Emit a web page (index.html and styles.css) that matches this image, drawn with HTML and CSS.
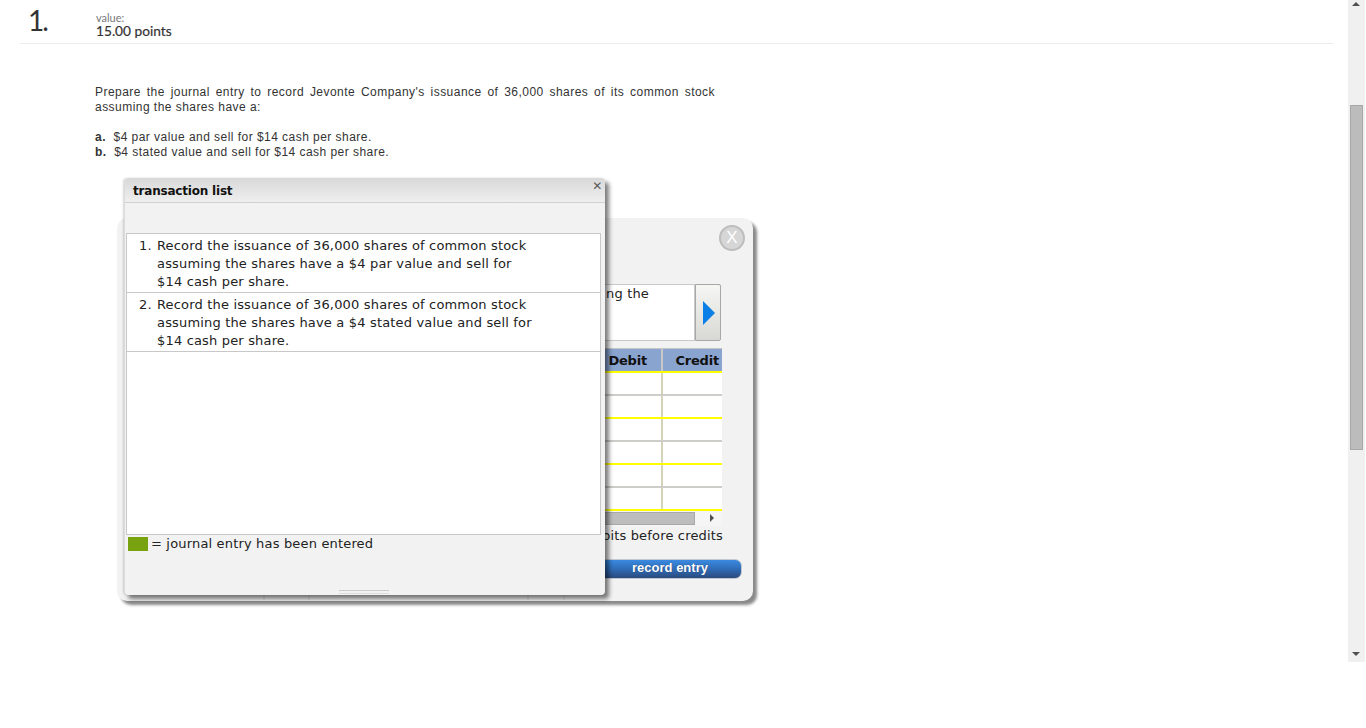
FILE: index.html
```html
<!DOCTYPE html>
<html lang="en">
<head>
  <meta charset="UTF-8" />
  <title>Question 1</title>
  <link rel="stylesheet" href="styles.css">
</head>
<body>
  <div class="page">
    <div class="question-head">
      <div class="question-num">1.</div>
      <div class="question-value">
        <div class="value-label">value:</div>
        <div class="value-points">15.00 points</div>
      </div>
    </div>

    <div class="question-body">
      <p class="prompt">Prepare the journal entry to record Jevonte Company's issuance of 36,000 shares of its common stock assuming the shares have a:</p>
      <p class="part"><b>a.</b>&nbsp; $4 par value and sell for $14 cash per share.</p>
      <p class="part"><b>b.</b>&nbsp; $4 stated value and sell for $14 cash per share.</p>
    </div>

    <!-- journal entry window, mostly covered by the list -->
    <div class="window entry-window">
      <div class="close-round">X</div>
      <div class="entry-desc">
        <div class="desc-text">ng the</div>
        <div class="desc-next"><span class="next-arrow"></span></div>
      </div>
      <div class="entry-table">
        <div class="table-head">
          <div class="cell-debit">Debit</div>
          <div class="cell-credit">Credit</div>
        </div>
        <div class="table-row"><div class="cell-debit"></div><div class="cell-credit"></div></div>
        <div class="table-row"><div class="cell-debit"></div><div class="cell-credit"></div></div>
        <div class="table-row"><div class="cell-debit"></div><div class="cell-credit"></div></div>
        <div class="table-row"><div class="cell-debit"></div><div class="cell-credit"></div></div>
        <div class="table-row"><div class="cell-debit"></div><div class="cell-credit"></div></div>
        <div class="table-row"><div class="cell-debit"></div><div class="cell-credit"></div></div>
      </div>
      <div class="entry-scroll">
        <div class="entry-scroll-thumb"></div>
        <div class="entry-scroll-arrow"></div>
      </div>
      <div class="entry-note">debits before credits</div>
      <div class="record-btn">record entry</div>
      <div class="entry-ticks">
        <span class="tick tick-a"></span>
        <span class="tick tick-b"></span>
        <span class="tick tick-c"></span>
        <span class="tick tick-d"></span>
      </div>
    </div>

    <div class="window list-window">
      <div class="list-title">
        <span>transaction list</span>
        <span class="list-close">&#10005;</span>
      </div>
      <div class="list-box">
        <div class="list-item"><span class="item-num">1.</span><span class="item-text">Record the issuance of 36,000 shares of common stock assuming the shares have a $4 par value and sell for $14 cash per share.</span></div>
        <div class="list-item"><span class="item-num">2.</span><span class="item-text">Record the issuance of 36,000 shares of common stock assuming the shares have a $4 stated value and sell for $14 cash per share.</span></div>
      </div>
      <div class="legend"><span class="legend-swatch"></span>= journal entry has been entered</div>
      <div class="grip"></div>
    </div>
  </div>

  <div class="scrollbar">
    <div class="scroll-up"></div>
    <div class="scroll-thumb"></div>
    <div class="scroll-down"></div>
  </div>
</body>
</html>
```

FILE: styles.css
```css
* {
  margin: 0;
  padding: 0;
  box-sizing: border-box;
}

html, body {
  height: 728px;
  overflow: hidden;
  background: #fff;
}

body {
  position: relative;
  font-family: 'Liberation Sans', Arial, sans-serif;
  color: #333;
}

.page {
  width: 1348px;
  padding: 0 15px 0 20px;
}

.question-head {
  display: flex;
  height: 44px;
  border-bottom: 1px solid #ececec;
}

.question-num {
  width: 76px;
  padding: 3px 0 0 8px;
  font-family: Lato, sans-serif;
  font-size: 28px;
  line-height: 34px;
  letter-spacing: -2px;
  color: #333;
}

.value-label {
  margin-top: 11px;
  font-family: Lato, sans-serif;
  font-size: 11px;
  line-height: 13px;
  color: #777;
}

.value-points {
  margin-top: -1px;
  font-family: Lato, sans-serif;
  font-size: 13.7px;
  line-height: 15px;
  color: #333;
  -webkit-text-stroke: 0.2px #333;
}

.question-body {
  width: 620px;
  margin: 41px 0 0 75px;
  font-size: 12px;
  line-height: 15px;
  letter-spacing: 0.46px;
}

.prompt {
  margin-bottom: 15px;
  text-align: justify;
}

.window {
  position: absolute;
  background: #f2f2f2;
}

.entry-window {
  left: 117px;
  top: 218px;
  width: 636px;
  height: 383px;
  border-radius: 10px;
  box-shadow: 4px 4px 3px #8a8a8a;
}

.close-round {
  position: absolute;
  top: 7px;
  left: 602px;
  width: 26px;
  height: 26px;
  border: 2px solid #bdbdbd;
  border-radius: 50%;
  background: #d6d6d6;
  color: #fff;
  font-family: 'Liberation Sans', sans-serif;
  font-size: 17px;
  line-height: 22px;
  text-align: center;
}

.entry-desc {
  display: flex;
  position: absolute;
  top: 66px;
  left: 26px;
  width: 578px;
  height: 57px;
}

.desc-text {
  flex: 1;
  padding: 0 45px 0 0;
  border: 1px solid #c8c8c8;
  background: #fff;
  text-align: right;
  font-family: 'DejaVu Sans', Verdana, sans-serif;
  font-size: 13px;
  line-height: 18px;
  letter-spacing: 0.17px;
  color: #222;
}

.desc-next {
  display: flex;
  align-items: center;
  justify-content: center;
  width: 26px;
  padding-left: 2px;
  border: 1px solid #a8a8a8;
  border-radius: 0 2px 2px 0;
  background: linear-gradient(#f6f6f4, #d8d8d4);
}

.next-arrow {
  width: 0;
  height: 0;
  border-top: 12px solid transparent;
  border-bottom: 12px solid transparent;
  border-left: 12px solid #0b7fe6;
}

.entry-table {
  position: absolute;
  top: 130px;
  left: 26px;
  width: 579px;
  border-top: 1px solid #c4c4c4;
}

.table-head {
  display: flex;
  height: 24px;
  background: #8aa4d0;
  border-bottom: 2px solid #ffff00;
  font-family: 'DejaVu Sans', Verdana, sans-serif;
  font-size: 13px;
  font-weight: bold;
  line-height: 23px;
  letter-spacing: -0.2px;
  color: #111;
}

.table-head .cell-debit {
  border-right: 2px solid #c8c8c8;
  text-align: right;
  padding-right: 14px;
}

.table-head .cell-credit {
  text-align: right;
  padding-right: 3px;
}

.cell-debit {
  width: 520px;
}

.cell-credit {
  width: 59px;
}

.table-row {
  display: flex;
  height: 23px;
  background: #fff;
  border-bottom: 2px solid #ffff00;
}

.table-row:nth-child(even) {
  border-bottom: 2px solid #d0d0d0;
  border-image: linear-gradient(#eeee70, #cccccc) 1;
}

.table-row .cell-debit {
  border-right: 2px solid #d4d4b8;
}

.entry-scroll {
  display: flex;
  position: absolute;
  top: 293px;
  left: 26px;
  width: 579px;
  height: 15px;
  padding: 1px 0;
  background: #f5f5f5;
}

.entry-scroll-thumb {
  width: 552px;
  background: #bdbdbd;
  border: 1px solid #a8a8a8;
}

.entry-scroll-arrow {
  width: 0;
  height: 0;
  margin: 2px 0 0 15px;
  border-top: 4px solid transparent;
  border-bottom: 4px solid transparent;
  border-left: 4px solid #505050;
}

.entry-note {
  position: absolute;
  top: 309px;
  right: 30px;
  font-family: 'DejaVu Sans', Verdana, sans-serif;
  font-size: 13px;
  line-height: 18px;
  letter-spacing: 0.17px;
  color: #222;
}

.record-btn {
  position: absolute;
  top: 341px;
  left: 481px;
  width: 144px;
  height: 20px;
  border: 1px solid #c4c8d0;
  border-radius: 7px;
  background: linear-gradient(#3a8ae0, #2f6cb8 50%, #2b4a7c);
  color: #fff;
  font-family: 'Liberation Sans', sans-serif;
  font-size: 13px;
  font-weight: bold;
  line-height: 16px;
  text-align: center;
  text-shadow: 0 0 1px #1c3c70;
}

.tick {
  position: absolute;
  top: 377px;
  width: 2px;
  height: 5px;
  background: rgba(0, 0, 0, 0.05);
}

.tick-a { left: 146px; }
.tick-b { left: 191px; }
.tick-c { left: 410px; }
.tick-d { left: 446px; }

.list-window {
  left: 124px;
  top: 178px;
  width: 481px;
  height: 417px;
  border-radius: 4px;
  border-left: 1px solid #dcdcdc;
  box-shadow: 4px 4px 4px rgba(0, 0, 0, 0.5), -1px 0 2px rgba(0, 0, 0, 0.15);
}

.list-title {
  display: flex;
  justify-content: space-between;
  height: 25px;
  padding: 0 3px 0 8px;
  border-radius: 4px 4px 0 0;
  background: linear-gradient(#d8d8d8, #efefef);
  border-bottom: 1px solid #d0d0d0;
  font-family: 'DejaVu Sans', Verdana, sans-serif;
  font-size: 12px;
  font-weight: bold;
  line-height: 26px;
  letter-spacing: -0.2px;
  color: #111;
}

.list-close {
  font-size: 12px;
  line-height: 17px;
  color: #5a5a5a;
}

.list-box {
  width: 475px;
  height: 302px;
  margin: 30px 0 0 1px;
  background: #fff;
  border: 1px solid #c8c8c8;
}

.list-item {
  display: flex;
  height: 59px;
  padding: 3px 64px 0 12px;
  border-bottom: 1px solid #c8c8c8;
  font-family: 'DejaVu Sans', Verdana, sans-serif;
  font-size: 13px;
  line-height: 18px;
  letter-spacing: 0.17px;
  color: #222;
}

.item-num {
  flex: none;
  width: 18px;
}

.legend {
  display: flex;
  margin: 0 0 0 3px;
  font-family: 'DejaVu Sans', Verdana, sans-serif;
  font-size: 13px;
  line-height: 17px;
  letter-spacing: 0.17px;
  color: #222;
}

.legend-swatch {
  width: 20px;
  height: 14px;
  margin: 2px 3px 0 0;
  background: #78a20e;
}

.grip {
  position: absolute;
  left: 214px;
  bottom: 1px;
  width: 50px;
  height: 4px;
  border-top: 1px solid #ccc;
  border-bottom: 1px solid #ddd;
}

.scrollbar {
  position: absolute;
  top: 0;
  left: 1348px;
  width: 17px;
  height: 662px;
  background: #f0f0f0;
}

.scroll-up, .scroll-down {
  position: absolute;
  left: 4px;
  width: 0;
  height: 0;
  border-left: 4px solid transparent;
  border-right: 4px solid transparent;
}

.scroll-up {
  top: 2px;
  border-bottom: 4px solid #505050;
}

.scroll-down {
  bottom: 6px;
  border-top: 4px solid #505050;
}

.scroll-thumb {
  position: absolute;
  top: 105px;
  left: 2px;
  width: 13px;
  height: 345px;
  background: #bcbcbc;
  border: 1px solid #a8a8a8;
}
```
